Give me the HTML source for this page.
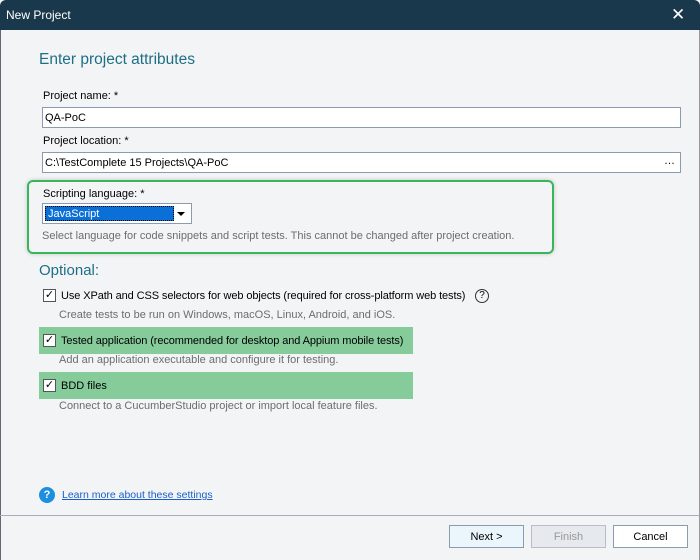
<!DOCTYPE html>
<html><head><style>
*{box-sizing:border-box;margin:0;padding:0}
body{width:700px;height:560px;background:#f3f4f6;font-family:"Liberation Sans",sans-serif;font-size:11px;color:#000;position:relative;overflow:hidden}
.a{position:absolute;white-space:nowrap}
.title{left:0;top:0;width:700px;height:30px;background:#1a384b;color:#fff;font-size:12px;padding:8px 6px;border-radius:6px 6px 0 0}
.inp{background:#fff;border:1px solid #8b9bb0;height:21px;padding:4px 2px}
.gray{color:#6d6d6d}
.cb{width:13px;height:13px;border:1px solid #555;background:#fff;font-size:11px;line-height:11px;text-align:center}
.hl{background:#86cc9b;height:27px}
.btn{border:1px solid #8b9bb0;background:#fff;height:23px;width:75px;text-align:center;padding-top:5px}
</style></head><body>
<div class="a title">New Project</div>
<div class="a" style="left:671px;top:5px;color:#fff;font-size:17px">✕</div>
<div class="a" style="left:0;top:30px;width:1px;height:530px;background:#667"></div>
<div class="a" style="left:699px;top:30px;width:1px;height:530px;background:#999"></div>
<div class="a" style="left:39px;top:51px;font-size:15.5px;color:#1d6f86">Enter project attributes</div>
<div class="a" style="left:43px;top:90px">Project name: *</div>
<div class="a inp" style="left:42px;top:107px;width:639px">QA-PoC</div>
<div class="a" style="left:43px;top:135px">Project location: *</div>
<div class="a inp" style="left:42px;top:152px;width:639px">C:\TestComplete 15 Projects\QA-PoC<span style="position:absolute;right:5px;top:2px">…</span></div>
<div class="a" style="left:27px;top:180px;width:527px;height:74px;border:2px solid #3ab65a;border-radius:6px;box-shadow:0 0 4px rgba(0,0,0,.2)"></div>
<div class="a" style="left:43px;top:188px">Scripting language: *</div>
<div class="a" style="left:42px;top:203px;width:150px;height:21px;border:1px solid #8b9bb0;background:#fff"><div style="position:absolute;left:2px;top:2px;width:129px;height:15px;background:#0a6fd6;color:#fff;padding:1px 2px;border:1px dotted #000">JavaScript</div><div style="position:absolute;right:6px;top:8px;border:4px solid transparent;border-top:4px solid #000"></div></div>
<div class="a gray" style="left:42px;top:230px">Select language for code snippets and script tests. This cannot be changed after project creation.</div>
<div class="a" style="left:39px;top:262px;font-size:15px;color:#1d6f86">Optional:</div>
<div class="a cb" style="left:43px;top:289px">✓</div>
<div class="a" style="left:61px;top:290px;letter-spacing:-0.1px">Use XPath and CSS selectors for web objects (required for cross-platform web tests)</div>
<div class="a" style="left:475px;top:289px;width:14px;height:14px;border:1px solid #333;border-radius:50%;font-size:10px;text-align:center;line-height:12px">?</div>
<div class="a gray" style="left:59px;top:309px">Create tests to be run on Windows, macOS, Linux, Android, and iOS.</div>
<div class="a hl" style="left:39px;top:327px;width:374px"></div>
<div class="a cb" style="left:43px;top:334px">✓</div>
<div class="a" style="left:61px;top:335px;letter-spacing:-0.1px">Tested application (recommended for desktop and Appium mobile tests)</div>
<div class="a gray" style="left:59px;top:354px">Add an application executable and configure it for testing.</div>
<div class="a hl" style="left:39px;top:372px;width:374px"></div>
<div class="a cb" style="left:43px;top:379px">✓</div>
<div class="a" style="left:61px;top:380px">BDD files</div>
<div class="a gray" style="left:59px;top:400px">Connect to a CucumberStudio project or import local feature files.</div>
<div class="a" style="left:39px;top:487px;width:16px;height:16px;border-radius:50%;background:#1d8fe0;color:#fff;font-weight:bold;font-size:11px;text-align:center;line-height:16px">?</div>
<div class="a" style="left:62px;top:489px;color:#1a5fc9;text-decoration:underline;font-size:10.5px">Learn more about these settings</div>
<div class="a" style="left:0;top:515px;width:700px;height:1px;background:#aab"></div>
<div class="a btn" style="left:449px;top:525px;background:#eaf6fc">Next &gt;</div>
<div class="a btn" style="left:531px;top:525px;background:#e6e9ee;color:#999;border-color:#bbc">Finish</div>
<div class="a btn" style="left:613px;top:525px">Cancel</div>
</body></html>
